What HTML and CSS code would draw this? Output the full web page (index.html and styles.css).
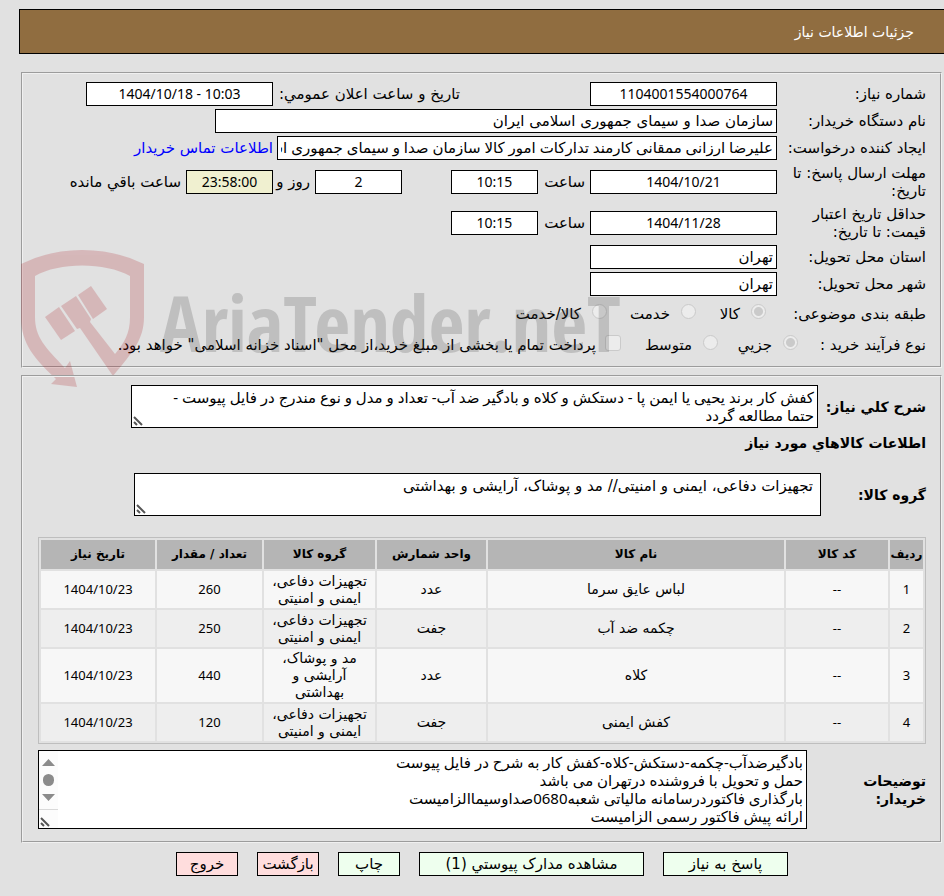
FILE: index.html
```
<!DOCTYPE html>
<html lang="fa" dir="rtl">
<head>
    <meta charset="UTF-8">
    <meta name="viewport" content="width=device-width, initial-scale=1.0">
    <title>جزئیات اطلاعات نیاز</title>
    <link rel="stylesheet" href="styles.css">
</head>
<body>
    <h1 class="page-title">جزئیات اطلاعات نیاز</h1>

    <form class="need-form">
        <fieldset class="panel info">
            <div class="row">
                <label class="caption" for="need-no">شماره نیاز:</label>
                <input class="field medium center" id="need-no" type="text" value="1104001554000764" readonly>
                <label class="announce" for="announce">تاریخ و ساعت اعلان عمومي:</label>
                <input class="field medium center" id="announce" type="text" dir="ltr" value="1404/10/18 - 10:03" readonly>
            </div>
            <div class="row">
                <label class="caption" for="org">نام دستگاه خریدار:</label>
                <input class="field wide" id="org" type="text" value="سازمان صدا و سیمای جمهوری اسلامی ایران" readonly>
            </div>
            <div class="row">
                <label class="caption" for="creator">ایجاد کننده درخواست:</label>
                <input class="field creator" id="creator" type="text" value="علیرضا ارزانی ممقانی کارمند تدارکات امور کالا سازمان صدا و سیمای جمهوری اسلامی ایران" readonly>
                <a class="contact" href="#">اطلاعات تماس خریدار</a>
            </div>
            <div class="row tall">
                <label class="caption" for="deadline">مهلت ارسال پاسخ: تا تاریخ:</label>
                <input class="field medium center" id="deadline" type="text" value="1404/10/21" readonly>
                <label class="hour" for="deadline-hour">ساعت</label>
                <input class="field short center" id="deadline-hour" type="text" value="10:15" readonly>
                <input class="field short center days" id="days" type="text" value="2" readonly>
                <label class="day-label" for="days">روز و</label>
                <input class="field short center remaining" id="remaining" type="text" value="23:58:00" readonly>
                <label class="remaining-label" for="remaining">ساعت باقي مانده</label>
            </div>
            <div class="row tall">
                <label class="caption" for="validity">حداقل تاریخ اعتبار قیمت: تا تاریخ:</label>
                <input class="field medium center" id="validity" type="text" value="1404/11/28" readonly>
                <label class="hour" for="validity-hour">ساعت</label>
                <input class="field short center" id="validity-hour" type="text" value="10:15" readonly>
            </div>
            <div class="row">
                <label class="caption" for="province">استان محل تحویل:</label>
                <input class="field medium" id="province" type="text" value="تهران" readonly>
            </div>
            <div class="row">
                <label class="caption" for="city">شهر محل تحویل:</label>
                <input class="field medium" id="city" type="text" value="تهران" readonly>
            </div>
            <div class="row options">
                <span class="caption">طبقه بندی موضوعی:</span>
                <span class="choice subject-goods"><input id="goods" type="radio" name="subject" checked disabled><label for="goods">کالا</label></span>
                <span class="choice subject-service"><input id="service" type="radio" name="subject" disabled><label for="service">خدمت</label></span>
                <span class="choice"><input id="both" type="radio" name="subject" disabled><label for="both">کالا/خدمت</label></span>
            </div>
            <div class="row options">
                <span class="caption process">نوع فرآیند خرید :</span>
                <span class="choice process-small"><input id="small" type="radio" name="process" checked disabled><label for="small">جزیي</label></span>
                <span class="choice process-medium"><input id="middle" type="radio" name="process" disabled><label for="middle">متوسط</label></span>
                <span class="choice"><input id="treasury" type="checkbox" disabled><label for="treasury">پرداخت تمام یا بخشی از مبلغ خرید،از محل "اسناد خزانه اسلامی" خواهد بود.</label></span>
            </div>

            <svg class="watermark" width="600" height="142" viewBox="0 0 600 142" aria-hidden="true">
                <g fill="#aa141c">
                    <path d="M0 15Q28 1 61 1Q95 1 123 15V68C123 90 112 103 92 127L59 79L56 80L40 57L55 47L70 70L69 73L94 105C103 94 109 85 109 68V27C84 13 38 13 14 27V68C14 88 24 98 44 119L49 112L56 138L30 135L35 130C14 110 0 95 0 68Z"/>
                    <path d="M24 68L38 58L54 82L40 91Z"/>
                    <path d="M57 46L70 37L86 60L72 70Z"/>
                </g>
                <text x="139" y="103">AriaTender.neT</text>
            </svg>
        </fieldset>

        <fieldset class="panel goods">
            <div class="row brief">
                <label class="caption bold" for="brief">شرح کلي نیاز:</label>
                <div class="area">
                    <textarea id="brief" readonly>کفش کار برند یحیی یا ایمن پا - دستکش و کلاه و بادگیر ضد آب- تعداد و مدل و نوع مندرج در فایل پیوست - حتما مطالعه گردد</textarea>
                    <svg class="grip" width="10" height="10" viewBox="0 0 10 10"><path d="M1 1L9 9M1 6L4 9"/></svg>
                </div>
            </div>
            <h2 class="section-title">اطلاعات کالاهاي مورد نیاز</h2>
            <div class="row group">
                <label class="caption bold" for="group">گروه کالا:</label>
                <div class="area">
                    <textarea id="group" readonly>تجهیزات دفاعی، ایمنی و امنیتی// مد و پوشاک، آرایشی و بهداشتی</textarea>
                    <svg class="grip" width="10" height="10" viewBox="0 0 10 10"><path d="M1 1L9 9M1 6L4 9"/></svg>
                </div>
            </div>

            <table class="items">
                <colgroup>
                    <col class="c-row"><col class="c-code"><col class="c-name"><col class="c-unit"><col class="c-group"><col class="c-count"><col class="c-date">
                </colgroup>
                <thead>
                    <tr><th>ردیف</th><th>کد کالا</th><th>نام کالا</th><th>واحد شمارش</th><th>گروه کالا</th><th>تعداد / مقدار</th><th>تاریخ نیاز</th></tr>
                </thead>
                <tbody>
                    <tr><td class="num">1</td><td class="num">--</td><td>لباس عایق سرما</td><td>عدد</td><td>تجهیزات دفاعی، ایمنی و امنیتی</td><td class="num">260</td><td class="num">1404/10/23</td></tr>
                    <tr><td class="num">2</td><td class="num">--</td><td>چکمه ضد آب</td><td>جفت</td><td>تجهیزات دفاعی، ایمنی و امنیتی</td><td class="num">250</td><td class="num">1404/10/23</td></tr>
                    <tr><td class="num">3</td><td class="num">--</td><td>کلاه</td><td>عدد</td><td>مد و پوشاک، آرایشی و بهداشتی</td><td class="num">440</td><td class="num">1404/10/23</td></tr>
                    <tr><td class="num">4</td><td class="num">--</td><td>کفش ایمنی</td><td>جفت</td><td>تجهیزات دفاعی، ایمنی و امنیتی</td><td class="num">120</td><td class="num">1404/10/23</td></tr>
                </tbody>
            </table>

            <div class="row notes">
                <label class="caption bold" for="notes">توضیحات خریدار:</label>
                <div class="area">
                    <textarea id="notes" readonly>بادگیرضدآب-چکمه-دستکش-کلاه-کفش کار به شرح در فایل پیوست
حمل و تحویل با فروشنده درتهران می باشد
بارگذاری فاکتوردرسامانه مالیاتی شعبه0680صداوسیماالزامیست
ارائه پیش فاکتور رسمی الزامیست</textarea>
                    <svg class="scroll" width="19" height="77" viewBox="0 0 19 77">
                        <path fill="#fcfcfc" d="M0 0H19V77H0Z"/>
                        <path fill="#8b8b8b" d="M3 15L9.500 8L16 15ZM3 43H16L9.500 50Z"/>
                        <rect x="4" y="23" width="11" height="12" rx="5.500" fill="#8b8b8b"/>
                        <path stroke="#d9d9d9" d="M0 58.500H19"/>
                    </svg>
                    <svg class="grip" width="10" height="10" viewBox="0 0 10 10"><path d="M1 1L9 9M1 6L4 9"/></svg>
                </div>
            </div>
        </fieldset>

        <div class="actions">
            <button class="ok w-reply" type="button">پاسخ به نیاز</button>
            <button class="ok w-docs" type="button">مشاهده مدارک پیوستي (1)</button>
            <button class="ok" type="button">چاپ</button>
            <button class="cancel" type="button">بازگشت</button>
            <button class="cancel" type="button">خروج</button>
        </div>
    </form>
</body>
</html>
```

FILE: styles.css
```
* {
    box-sizing: border-box;
}
body {
    margin: 9px 0 0 19px;
    background-color: #e1e1e1;
    color: #000;
    font-family: "DejaVu Sans", sans-serif;
    font-size: 15px;
    line-height: 18px;
}
input, textarea, button {
    font: inherit;
    color: inherit;
}
.page-title {
    margin: 0 0 18px;
    padding: 13px 30px 12px;
    border: 1px solid #000;
    border-right: none;
    background-color: #906d40;
    color: #fff;
    font-size: 14px;
    font-weight: normal;
}
.panel {
    position: relative;
    margin: 0 2px 7px;
    min-width: 0;
    border: 2px groove #f0f0f0;
}
.info {
    display: flex;
    flex-direction: column;
    gap: 3px;
    padding: 8px 14px;
}
.row {
    display: flex;
    align-items: center;
}
.tall {
    min-height: 38px;
}
.caption {
    flex: none;
    width: 149px;
    padding-left: 8px;
}
.bold {
    font-size: 14px;
    font-weight: bold;
}
.field {
    flex: none;
    height: 24px;
    padding: 0 3px;
    border: 1px solid #000;
    background-color: #fff;
}
.center {
    padding-bottom: 2px;
    font-family: "Noto Sans", sans-serif;
    font-size: 14px;
    text-align: center;
}
.medium {
    width: 187px;
}
.short {
    width: 87px;
}
.wide {
    width: 562px;
}
.creator {
    width: 500px;
    padding-bottom: 2px;
}
.creator, #brief, #notes {
    font-family: "Noto Sans", "DejaVu Sans", sans-serif;
}
.announce {
    width: 187px;
    margin-right: 130px;
    white-space: nowrap;
}
.contact {
    margin-right: 4px;
    color: #00f;
    text-decoration: none;
}
.hour {
    width: 52px;
    padding-right: 5px;
}
.days {
    margin-right: 49px;
}
.day-label {
    width: 42px;
    padding-right: 5px;
}
.remaining {
    background-color: #f0f0d0;
}
.remaining-label {
    padding-right: 5px;
}
.options {
    min-height: 28px;
    padding-top: 2px;
}
.choice {
    display: flex;
    align-items: center;
}
.choice label {
    white-space: nowrap;
}
.choice input {
    appearance: none;
    width: 15px;
    height: 15px;
    margin: 0 11px 5px;
    border: 1px solid #cacaca;
    border-radius: 50%;
    background-color: #ececec;
}
.choice input:checked {
    background: radial-gradient(circle, #cacaca 4px, #ececec 5px);
}
.choice input[type="checkbox"] {
    width: 16px;
    height: 16px;
    margin: 0 0 5px 9px;
    border-radius: 3px;
}
.process {
    width: 117px;
}
.subject-goods {
    width: 70px;
}
.subject-service {
    width: 89px;
}
.process-small {
    width: 80px;
}
.process-medium {
    width: 108px;
}
.watermark {
    position: absolute;
    left: -2px;
    top: 175px;
    overflow: visible;
    opacity: 0.2;
    pointer-events: none;
}
.watermark text {
    direction: ltr;
    fill: #3c3c3c;
    font-family: "Open Sans Condensed", "Open Sans", sans-serif;
    font-size: 78px;
    font-weight: bold;
}
.goods {
    padding: 8px 14px 12px 15px;
}
.area {
    position: relative;
    width: 687px;
}
textarea {
    display: block;
    width: 100%;
    height: 43px;
    padding: 3px;
    border: 1px solid #000;
    background-color: #fff;
    overflow: hidden;
    resize: none;
}
.grip {
    position: absolute;
    left: 2px;
    bottom: 2px;
    fill: none;
    stroke: #555;
    stroke-width: 2;
}
.scroll {
    position: absolute;
    left: 1px;
    top: 1px;
}
.brief .caption {
    width: 108px;
    padding: 0;
}
#brief {
    padding: 2px 3px 2px 20px;
}
.section-title {
    margin: 6px 0 21px;
    font-size: 14px;
    line-height: 18px;
}
.group {
    margin-bottom: 21px;
}
.group .caption {
    width: 105px;
    padding: 0;
}
#group {
    padding: 3px 7px;
}
.items {
    width: 100%;
    table-layout: fixed;
    border: 1px solid #bebebe;
    border-spacing: 2px;
    font-size: 14px;
    line-height: 17px;
    text-align: center;
}
.items th {
    height: 29px;
    padding: 0;
    background-color: #b5b5b5;
    font-size: 12px;
}
.items td {
    height: 37px;
    padding: 1px 4px;
    background-color: #f7f7f7;
}
.items tr:nth-child(even) td {
    background-color: #eee;
}
.items .num {
    font-family: "Noto Sans", sans-serif;
    font-size: 13px;
}
.c-row { width: 33px; }
.c-code { width: 102px; }
.c-unit { width: 109px; }
.c-group { width: 111px; }
.c-count { width: 105px; }
.c-date { width: 114px; }
.notes {
    margin-top: 6px;
}
.notes .caption {
    width: 119px;
    padding-left: 20px;
}
.notes .area {
    width: 769px;
}
#notes {
    height: 79px;
    padding-top: 2px;
}
.actions {
    display: flex;
    gap: 19px;
    margin-top: 9px;
    padding-right: 156px;
}
button {
    width: 62px;
    height: 24px;
    padding: 0;
    border: 1px solid #000;
    white-space: nowrap;
    cursor: pointer;
}
.w-reply {
    width: 125px;
}
.w-docs {
    width: 225px;
}
.ok {
    background-color: #efe;
}
.cancel {
    background-color: #fdd;
}
```
